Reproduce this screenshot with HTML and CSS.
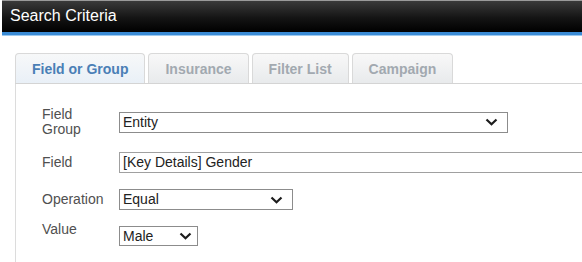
FILE: index.html
```html
<!DOCTYPE html>
<html>
<head>
    <title>Search Criteria</title>
    <link rel="stylesheet" href="styles.css">
</head>
<body>
    <div class="window">
        <div class="titlebar">Search Criteria</div>
        <div class="content">
            <ul class="tabs">
                <li class="tab active">Field or Group</li>
                <li class="tab">Insurance</li>
                <li class="tab">Filter List</li>
                <li class="tab">Campaign</li>
            </ul>
            <div class="panel">
                <div class="row">
                    <label class="label">Field<br>Group</label>
                    <div class="select entity">
                        <span>Entity</span>
                        <svg class="chevron" width="13" height="8" viewBox="0 0 13 8"><path d="M1.5 1.5 L6.5 6.3 L11.5 1.5" fill="none" stroke="#1c1c1c" stroke-width="2.2"/></svg>
                    </div>
                </div>
                <div class="row">
                    <label class="label">Field</label>
                    <div class="textbox">[Key Details] Gender</div>
                </div>
                <div class="row">
                    <label class="label">Operation</label>
                    <div class="select operation">
                        <span>Equal</span>
                        <svg class="chevron" width="13" height="8" viewBox="0 0 13 8"><path d="M1.5 1.5 L6.5 6.3 L11.5 1.5" fill="none" stroke="#1c1c1c" stroke-width="2.2"/></svg>
                    </div>
                </div>
                <div class="row row-top">
                    <label class="label label-up">Value</label>
                    <div class="select value">
                        <span>Male</span>
                        <svg class="chevron" width="13" height="8" viewBox="0 0 13 8"><path d="M1.5 1.5 L6.5 6.3 L11.5 1.5" fill="none" stroke="#1c1c1c" stroke-width="2.2"/></svg>
                    </div>
                </div>
            </div>
        </div>
    </div>
</body>
</html>
```

FILE: styles.css
```css
body {
    margin: 0;
    font-family: 'Liberation Sans', Arial, sans-serif;
    background-color: #fff;
    overflow: hidden;
}
.window {
    margin-left: 2px;
    height: 262px;
}
.titlebar {
    height: 31px;
    padding-left: 8px;
    line-height: 29px;
    font-size: 16px;
    color: #fff;
    border-top: 1px solid #9a9a9a;
    background: linear-gradient(#3a3a3a, #141414 55%, #000);
    border-bottom: 3px solid #3a8bd5;
    box-shadow: 0 1px 0 #9cc8ee;
}
.content {
    padding: 18px 0 0 13px;
}
.tabs {
    list-style-type: none;
    margin: 0;
    padding: 0;
    display: flex;
    gap: 3px;
    border-bottom: 1px solid #d4d4d4;
}
.tab {
    height: 29px;
    padding: 0 16px;
    line-height: 30px;
    font-size: 14px;
    font-weight: bold;
    color: #a2a9b0;
    border: 1px solid #d9d9d9;
    border-bottom: none;
    border-radius: 4px 4px 0 0;
    background: linear-gradient(#f8f8f8, #e8eaec);
}
.tab.active {
    color: #4a7fb6;
    background: linear-gradient(#f7f8f9, #e9f0f7);
}
.panel {
    border-left: 1px solid #dcdcdc;
    padding: 23px 0 0 26px;
    height: 155px;
}
.row {
    display: flex;
    align-items: center;
    margin-bottom: 16px;
}
.row:first-child {
    margin-bottom: 15px;
}
.row-top {
    align-items: flex-start;
}
.label {
    width: 77px;
    flex-shrink: 0;
    font-size: 14px;
    line-height: 15px;
    color: #505050;
}
.label-up {
    margin-top: -4px;
}
.select, .textbox {
    box-sizing: border-box;
    height: 21px;
    border: 1px solid #8c8c8c;
    padding: 0 0 0 3px;
    font-size: 14px;
    line-height: 19px;
    color: #222;
    display: flex;
    align-items: center;
    justify-content: space-between;
    flex-shrink: 0;
}
.chevron {
    margin-right: 9px;
}
.entity {
    width: 389px;
}
.operation {
    width: 174px;
}
.value {
    width: 79px;
    height: 20px;
}
.value .chevron {
    margin-right: 5px;
}
.textbox {
    width: 480px;
    border-color: #a0a0a0;
}
```
